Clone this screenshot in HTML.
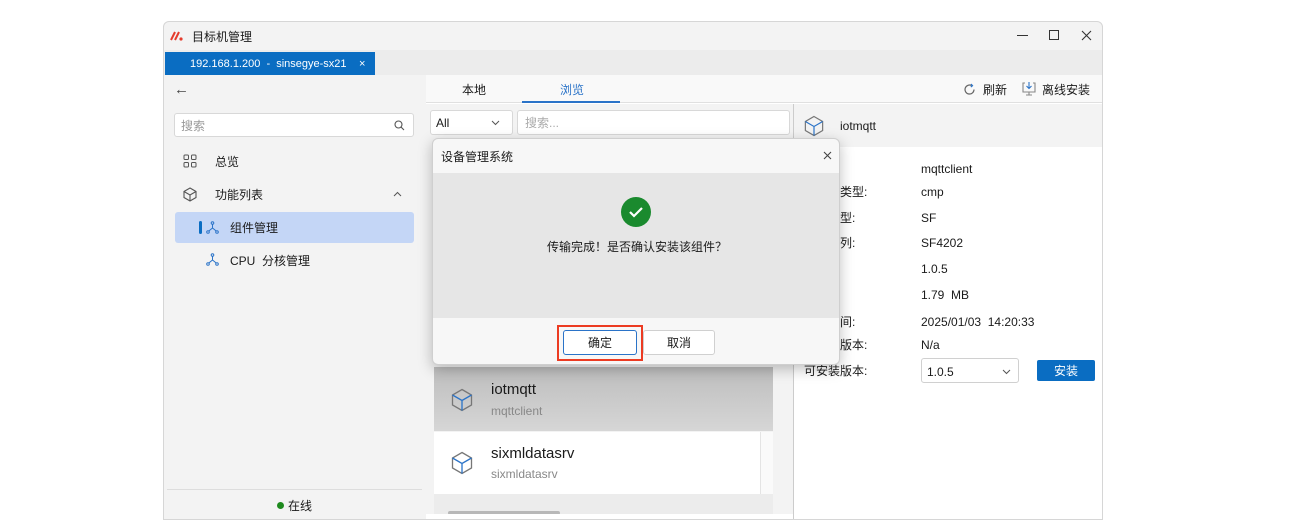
<!DOCTYPE html>
<html><head><meta charset="utf-8"><style>
*{box-sizing:border-box;margin:0;padding:0}
body{width:1295px;height:530px;background:#fff;position:relative;overflow:hidden;font-family:"Liberation Sans","Noto Sans CJK SC",sans-serif;font-size:12px;line-height:14px;color:#1a1a1a}
.a{position:absolute}
</style></head><body>
<div class="a" style="left:163px;top:21px;width:940px;height:499px;border:1px solid #d6d6d6;border-radius:6px 6px 0 0;background:#f3f3f3;overflow:hidden">
 <svg class="a" style="left:6px;top:9px" width="14" height="10" viewBox="0 0 14 10"><path d="M1 9L5 1M5 9L9 1" stroke="#e53b2c" stroke-width="2"/><circle cx="11" cy="8" r="1.6" fill="#e53b2c"/></svg>
 <div class="a" style="left:28px;top:8px">目标机管理</div>
 <div class="a" style="left:853px;top:13px;width:11px;height:1px;background:#333"></div>
 <div class="a" style="left:885px;top:8px;width:10px;height:10px;border:1.2px solid #333"></div>
 <svg class="a" style="left:917px;top:8px" width="11" height="11" viewBox="0 0 11 11"><path d="M1 1L10 10M10 1L1 10" stroke="#333" stroke-width="1.1"/></svg>
 <div class="a" style="left:0;top:28px;width:940px;height:25px;background:#ececec"></div>
 <div class="a" style="left:1px;top:30px;width:210px;height:23px;background:#0a6dc2;color:#fff;font-size:11px;padding:5px 0 0 25px">192.168.1.200 &nbsp;- &nbsp;sinsegye-sx21<span style="position:absolute;left:194px;top:5px">×</span></div>
 <div class="a" style="left:10px;top:61px;font-size:15px;color:#444">←</div>
 <div class="a" style="left:10px;top:91px;width:240px;height:24px;background:#fff;border:1px solid #d8d8d8;border-radius:3px;color:#999;padding:5px 0 0 6px">搜索
  <svg style="position:absolute;right:8px;top:6px" width="11" height="11" viewBox="0 0 11 11" fill="none" stroke="#555" stroke-width="1.1"><circle cx="4.5" cy="4.5" r="3.5"/><path d="M7 7L10 10"/></svg></div>
 <svg class="a" style="left:19px;top:132px" width="14" height="14" viewBox="0 0 14 14" fill="none" stroke="#555" stroke-width="1"><rect x="1" y="1" width="4.5" height="4.5" rx="1"/><rect x="8.5" y="1" width="4.5" height="4.5" rx="1"/><rect x="1" y="8.5" width="4.5" height="4.5" rx="1"/><rect x="8.5" y="8.5" width="4.5" height="4.5" rx="1"/></svg>
 <div class="a" style="left:51px;top:133px">总览</div>
 <svg class="a" style="left:19px;top:165px" width="14" height="15" viewBox="0 0 14 15" fill="none" stroke="#555" stroke-width="1.1"><path d="M7 1L13 4.5V10.5L7 14L1 10.5V4.5Z M1 4.5L7 8L13 4.5 M7 8V14"/></svg>
 <div class="a" style="left:51px;top:166px">功能列表</div>
 <svg class="a" style="left:229px;top:169px" width="9" height="6" viewBox="0 0 9 6"><path d="M1 5L4.5 1.5L8 5" fill="none" stroke="#555"/></svg>
 <div class="a" style="left:11px;top:190px;width:239px;height:31px;background:#c4d6f6;border-radius:3px"></div>
 <div class="a" style="left:35px;top:199px;width:3px;height:13px;background:#0a6dc2;border-radius:2px"></div>
 <svg class="a" style="left:42px;top:199px" width="13" height="13" viewBox="0 0 13 13" fill="none" stroke="#2a73c8" stroke-width="1"><circle cx="6.5" cy="2" r="1.3"/><circle cx="2" cy="11" r="1.3"/><circle cx="11" cy="11" r="1.3"/><path d="M6.5 3.3V7L2.8 10M6.5 7L10.2 10"/></svg>
 <div class="a" style="left:66px;top:199px">组件管理</div>
 <svg class="a" style="left:42px;top:231px" width="13" height="13" viewBox="0 0 13 13" fill="none" stroke="#2a73c8" stroke-width="1"><circle cx="6.5" cy="2" r="1.3"/><circle cx="2" cy="11" r="1.3"/><circle cx="11" cy="11" r="1.3"/><path d="M6.5 3.3V7L2.8 10M6.5 7L10.2 10"/></svg>
 <div class="a" style="left:66px;top:232px">CPU &nbsp;分核管理</div>
 <div class="a" style="left:3px;top:467px;width:255px;height:1px;background:#ddd"></div>
 <div class="a" style="left:113px;top:480px;width:7px;height:7px;border-radius:50%;background:#1e8a1e"></div>
 <div class="a" style="left:124px;top:477px">在线</div>
 <div class="a" style="left:262px;top:53px;width:678px;height:446px;background:#fff"></div>
 <div class="a" style="left:262px;top:53px;width:678px;height:28px;background:#f9f9f9;border-bottom:1px solid #e0e0e0"></div>
 <div class="a" style="left:298px;top:61px">本地</div>
 <div class="a" style="left:396px;top:61px;color:#2a73c8">浏览</div>
 <div class="a" style="left:358px;top:79px;width:98px;height:2px;background:#2a73c8"></div>
 <svg class="a" style="left:799px;top:61px" width="13" height="13" viewBox="0 0 13 13" fill="none" stroke-width="1.2"><path d="M11 6.5A4.5 4.5 0 1 1 8.5 2.5" stroke="#666"/><path d="M8 1L9.5 2.7L7.8 4" stroke="#2a73c8"/></svg>
 <div class="a" style="left:819px;top:61px">刷新</div>
 <svg class="a" style="left:858px;top:59px" width="14" height="15" viewBox="0 0 14 15" fill="none" stroke-width="1.1"><path d="M3 2H1V11H13V2H11M4 14H10M7 11V14" stroke="#888"/><path d="M7 1V7M4.5 5L7 7.5L9.5 5" stroke="#2a73c8"/></svg>
 <div class="a" style="left:878px;top:61px">离线安装</div>
 <div class="a" style="left:262px;top:82px;width:367px;height:417px;background:#f3f3f3"></div>
 <div class="a" style="left:266px;top:88px;width:83px;height:25px;background:#fff;border:1px solid #d8d8d8;border-radius:3px;padding:5px 0 0 5px">All
  <svg style="position:absolute;left:60px;top:9px" width="9" height="6" viewBox="0 0 9 6"><path d="M1 1L4.5 4.5L8 1" fill="none" stroke="#555"/></svg></div>
 <div class="a" style="left:353px;top:88px;width:273px;height:25px;background:#fff;border:1px solid #d8d8d8;border-radius:3px;padding:5px 0 0 7px;color:#aaa">搜索...</div>
 <div class="a" style="left:270px;top:345px;width:339px;height:64px;background:linear-gradient(#bdbdbd,#d6d6d6)"></div>
 <svg class="a" style="left:287px;top:366px" width="22" height="24" viewBox="0 0 22 24" fill="none" stroke-width="1.3"><path d="M11 1.5L20.5 7V17L11 22.5L1.5 17V7Z" stroke="#777"/><path d="M1.5 7L11 12.5L20.5 7M11 12.5V22.5" stroke="#2a73c8"/></svg>
 <div class="a" style="left:327px;top:361px;font-size:15px">iotmqtt</div>
 <div class="a" style="left:327px;top:382px;color:#888">mqttclient</div>
 <div class="a" style="left:270px;top:410px;width:326px;height:62px;background:#fff"></div>
 <div class="a" style="left:596px;top:410px;width:13px;height:62px;background:#fafafa;border-left:1px solid #e4e4e4"></div>
 <svg class="a" style="left:287px;top:429px" width="22" height="24" viewBox="0 0 22 24" fill="none" stroke-width="1.3"><path d="M11 1.5L20.5 7V17L11 22.5L1.5 17V7Z" stroke="#777"/><path d="M1.5 7L11 12.5L20.5 7M11 12.5V22.5" stroke="#2a73c8"/></svg>
 <div class="a" style="left:327px;top:425px;font-size:15px">sixmldatasrv</div>
 <div class="a" style="left:327px;top:445px;color:#888">sixmldatasrv</div>
 <div class="a" style="left:270px;top:472px;width:339px;height:20px;background:#ececec"></div>
 <div class="a" style="left:284px;top:489px;width:112px;height:4px;border-radius:2px;background:#b8b8b8"></div>
 <div class="a" style="left:262px;top:492px;width:367px;height:7px;background:#fff"></div>
 <div class="a" style="left:629px;top:82px;width:1px;height:417px;background:#ccc"></div>
 <div class="a" style="left:630px;top:82px;width:310px;height:43px;background:#f3f3f3"></div>
 <svg class="a" style="left:640px;top:93px" width="20" height="22" viewBox="0 0 22 24" fill="none" stroke-width="1.3"><path d="M11 1.5L20.5 7V17L11 22.5L1.5 17V7Z" stroke="#777"/><path d="M1.5 7L11 12.5L20.5 7M11 12.5V22.5" stroke="#2a73c8"/></svg>
 <div class="a" style="left:676px;top:97px">iotmqtt</div>
 <div class="a" style="left:757px;top:140px">mqttclient</div>
 <div class="a" style="left:757px;top:163px">cmp</div>
 <div class="a" style="left:757px;top:189px">SF</div>
 <div class="a" style="left:757px;top:214px">SF4202</div>
 <div class="a" style="left:757px;top:240px">1.0.5</div>
 <div class="a" style="left:757px;top:266px">1.79 &nbsp;MB</div>
 <div class="a" style="left:757px;top:293px">2025/01/03 &nbsp;14:20:33</div>
 <div class="a" style="left:757px;top:316px">N/a</div>
 <div class="a" style="left:676px;top:163px">类型:</div>
 <div class="a" style="left:676px;top:189px">型:</div>
 <div class="a" style="left:676px;top:214px">列:</div>
 <div class="a" style="left:676px;top:293px">间:</div>
 <div class="a" style="left:676px;top:316px">版本:</div>
 <div class="a" style="left:640px;top:342px">可安装版本:</div>
 <div class="a" style="left:757px;top:336px;width:98px;height:25px;border:1px solid #d0d0d0;border-radius:3px;padding:6px 0 0 5px">1.0.5
  <svg style="position:absolute;left:80px;top:10px" width="9" height="6" viewBox="0 0 9 6"><path d="M1 1L4.5 4.5L8 1" fill="none" stroke="#555"/></svg></div>
 <div class="a" style="left:873px;top:338px;width:58px;height:21px;background:#0a6dc2;color:#fff;text-align:center;padding-top:4px;border-radius:2px">安装</div>
</div>
<div class="a" style="left:432px;top:138px;width:408px;height:227px;border:1px solid #cfcfcf;border-radius:6px;background:#f7f7f7;box-shadow:0 4px 14px rgba(0,0,0,.25);overflow:hidden">
 <div class="a" style="left:8px;top:11px">设备管理系统</div>
 <svg class="a" style="left:390px;top:12px" width="9" height="9" viewBox="0 0 9 9"><path d="M1 1L8 8M8 1L1 8" stroke="#444" stroke-width="1.1"/></svg>
 <div class="a" style="left:0;top:34px;width:408px;height:145px;background:#e6e6e6"></div>
 <div class="a" style="left:188px;top:58px;width:30px;height:30px;border-radius:50%;background:#1a8a2e"></div>
 <svg class="a" style="left:195px;top:66px" width="16" height="14" viewBox="0 0 16 14" fill="none" stroke="#fff" stroke-width="2.2"><path d="M2 7L6 11L14 3"/></svg>
 <div class="a" style="left:0;top:101px;width:408px;text-align:center">传输完成！是否确认安装该组件？</div>
 <div class="a" style="left:124px;top:186px;width:86px;height:36px;border:2px solid #ec3b22"></div>
 <div class="a" style="left:130px;top:191px;width:74px;height:25px;background:#fff;border:1px solid #2a73c8;border-radius:3px;text-align:center;padding-top:5px">确定</div>
 <div class="a" style="left:210px;top:191px;width:72px;height:25px;background:#fff;border:1px solid #d0d0d0;border-radius:3px;text-align:center;padding-top:5px">取消</div>
</div>
</body></html>
